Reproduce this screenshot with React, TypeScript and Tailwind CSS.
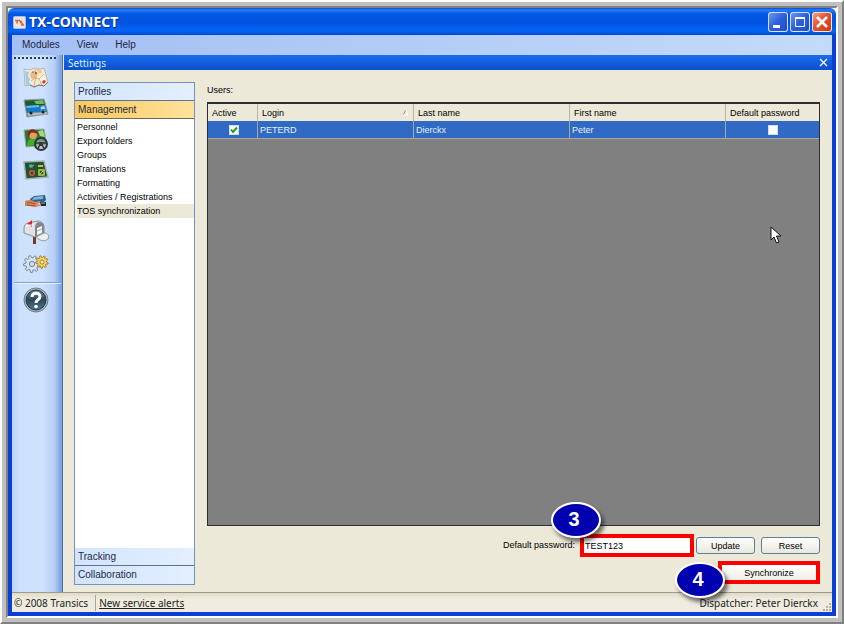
import React, { useState } from "react";

const ui = "font-['Liberation_Sans',Arial,sans-serif]";
const status = "font-['Noto_Sans','Liberation_Sans',sans-serif]";

const settingsLinks = [
  "Personnel",
  "Export folders",
  "Groups",
  "Translations",
  "Formatting",
  "Activities / Registrations",
  "TOS synchronization",
];

// Outline of a cog: each tooth is four points, two inner and two outer
function gearPath(cx: number, cy: number, inner: number, outer: number, teeth: number) {
  const points: string[] = [];
  for (let i = 0; i < teeth; i++) {
    [[0, inner], [0.2, outer], [0.5, outer], [0.7, inner]].forEach(([t, r]) => {
      const a = ((i + t) / teeth) * Math.PI * 2;
      points.push(`${(cx + Math.cos(a) * r).toFixed(2)} ${(cy + Math.sin(a) * r).toFixed(2)}`);
    });
  }
  return `M${points.join(" L")} Z`;
}

function MapIcon() {
  return (
    <svg width="28" height="24" viewBox="0 0 28 24">
      <path d="M2 4 L8 5 L13 3 L18 4 L22 3 L26 17 L22 21 L17 20 L12 22 L8 20 L3 21 Z" fill="#f9ead2" stroke="#a9adb3" strokeWidth="0.800" />
      <path d="M3 6 L7 7 L6 11 L8 14 L7 17 L9 20 L4 20 Z" fill="#9ccdf0" />
      <path d="M9 7 L13 6 L16 9 L14 13 L10 14 L8 11 Z" fill="#e9bb88" />
      <path d="M14 4 L19 4 L20 8 L16 8 Z" fill="#f0c79a" />
      <path d="M16 12 L21 10 L23 15 L18 17 Z" fill="#fff6e8" />
      <path d="M9 16 L13 13 L17 14 L22 9 M13 4 L14 12 L12 21 M17 14 L20 20" stroke="#d9a06a" fill="none" strokeWidth="0.800" />
      <circle cx="14" cy="8" r="0.900" fill="#7b4a2b" />
      <circle cx="11" cy="7" r="0.700" fill="#7b4a2b" />
      <path d="M20 17 L22 15 L24 16 L22 19 Z" fill="#e5281b" />
      <path d="M8 20 L12 22 L17 20 L22 21 L26 17" stroke="#6f747b" fill="none" />
    </svg>
  );
}

function TruckIcon() {
  return (
    <svg width="28" height="24" viewBox="0 0 28 24">
      <path d="M2 4 L22 3 L26 18 L5 21 Z" fill="#57686c" stroke="#8b9ba5" />
      <path d="M3 5 L21 4 L23 9 L4 10 Z" fill="#1f5a2c" />
      <path d="M12 5 L21 4 L22 8 L14 8 Z" fill="#74bb52" />
      <path d="M4 10 L17 9 L18 16 L6 17 Z" fill="#1a76c6" />
      <path d="M4 10 L17 9 L17 11 L5 12 Z" fill="#54c0ee" />
      <path d="M18 10 L23 9 L25 15 L18 16 Z" fill="#2a8edb" />
      <path d="M19 11 L22 10 L23 13 L19 13 Z" fill="#b7e1f6" />
      <path d="M5 17 L25 16 L25 18 L6 20 Z" fill="#b4bcbb" />
      <circle cx="9" cy="17" r="1.500" fill="#16222b" />
      <circle cx="21" cy="16" r="1.500" fill="#16222b" />
    </svg>
  );
}

function DriverIcon() {
  return (
    <svg width="28" height="26" viewBox="0 0 28 26">
      <path d="M2 4 L22 3 L25 19 L4 21 Z" fill="#2d7432" stroke="#a3adb0" />
      <path d="M16 5 L21 4 L23 11 L18 10 Z" fill="#a4d973" />
      <path d="M5 20 C5 14 8 12 12 12 C16 12 17 15 17 19 Z" fill="#3fae2a" />
      <circle cx="11" cy="9" r="4" fill="#e99a5c" />
      <path d="M6 9 C5 2 15 1 16 8 C13 7 10 5 8 8 L7 12 Z" fill="#7c2f14" />
      <circle cx="19" cy="18" r="6" fill="#b8c6c8" fillOpacity="0.500" stroke="#30363a" strokeWidth="2" />
      <path d="M13 17 L25 17 M19 18 L16 22 M19 18 L22 22" stroke="#30363a" strokeWidth="1.500" />
      <circle cx="19" cy="18" r="2" fill="#30363a" />
    </svg>
  );
}

function BoardIcon() {
  return (
    <svg width="28" height="24" viewBox="0 0 28 24">
      <path d="M2 4 L22 3 L26 19 L4 21 Z" fill="#245230" stroke="#a8b2b5" strokeWidth="1.500" />
      <path d="M7 7 L11 9 M7 9 L12 7 M9 6 L9 10" stroke="#63b7d0" />
      <rect x="16" y="7" width="5" height="2" fill="#c9bd48" />
      <circle cx="10" cy="15" r="2.300" fill="none" stroke="#cf5a34" strokeWidth="1.500" />
      <rect x="17" y="12" width="5" height="5" fill="none" stroke="#b9cf4b" strokeWidth="1.500" />
      <path d="M18 16 L21 13" stroke="#b9cf4b" />
    </svg>
  );
}

function HandIcon() {
  return (
    <svg width="26" height="20" viewBox="0 0 26 20">
      <path d="M7 8 L11 5 L22 4 L23 9 L20 12 L8 11 Z" fill="#2c6294" />
      <path d="M11 6 L20 5 L20 8 L9 9 Z" fill="#86b3d4" />
      <path d="M2 10 C6 8 10 9 12 11 L17 10 C18 11 16 13 13 13 L19 14 L13 16 L6 15 L2 15 Z" fill="#d98455" />
      <path d="M4 12 C8 11 9 12 12 13 M4 14 L12 15" stroke="#8e4526" fill="none" strokeWidth="0.800" />
      <path d="M17 11 H23 V15 H18 Z" fill="#1c2b3c" />
      <path d="M18 12 H22" stroke="#8fb0c9" />
    </svg>
  );
}

function MailboxIcon() {
  return (
    <svg width="28" height="26" viewBox="0 0 28 26">
      <path d="M11 15 H14 V25 H11 Z" fill="#6e4023" />
      <path d="M2 14 V9 C2 6 4 4 6 4 L16 2 C20 2 22 5 22 8 V15 L13 18 Z" fill="#dfe1e2" stroke="#8b9094" />
      <path d="M13 18 V9 C13 5 15 3 17 3 C21 3 22 6 22 8 V15 Z" fill="#80868b" />
      <path d="M15 9 L20 7 L20 14 L15 16 Z" fill="#f7f7f5" />
      <path d="M15 12 L20 10" stroke="#a3a7ab" />
      <path d="M14 18 L22 14 C26 14 28 17 26 20 C23 23 18 22 14 18 Z" fill="#eceeef" stroke="#92979a" />
      <path d="M5 5 L10 1 L10 8 L8 6 Z" fill="#e02432" />
      <path d="M4 8 C5 6 7 6 11 6" stroke="#fff" fill="none" />
    </svg>
  );
}

function GearsIcon() {
  return (
    <svg width="28" height="24" viewBox="0 0 28 24">
      <path d={gearPath(10, 13, 6.2, 8.5, 9)} fill="#d5e3f5" stroke="#78879c" />
      <circle cx="10" cy="13" r="2.700" fill="#c9dcf7" stroke="#78879c" />
      <path d={gearPath(20, 11, 4.5, 6.3, 9)} fill="#f7d25a" stroke="#a8842c" />
      <circle cx="20" cy="11" r="2" fill="#eaf2ff" stroke="#a8842c" />
    </svg>
  );
}

function HelpIcon() {
  return (
    <svg width="28" height="28" viewBox="0 0 28 28">
      <defs>
        <linearGradient id="help" x1="0" y1="0" x2="0" y2="1">
          <stop offset="0" stopColor="#6f8898" />
          <stop offset="0.500" stopColor="#2c4656" />
          <stop offset="1" stopColor="#4d7f92" />
        </linearGradient>
      </defs>
      <circle cx="14" cy="14" r="12" fill="#a9b8c4" stroke="#6c7c8b" />
      <circle cx="14" cy="14" r="10" fill="url(#help)" stroke="#223644" />
      <path d="M10 11 C10 6 18 6 18 10.500 C18 14 14 13.500 14 17" fill="none" stroke="#fff" strokeWidth="3" />
      <circle cx="14" cy="20.500" r="1.800" fill="#fff" />
    </svg>
  );
}

const modules = [
  { label: "Map", icon: <MapIcon /> },
  { label: "Vehicles", icon: <TruckIcon /> },
  { label: "Drivers", icon: <DriverIcon /> },
  { label: "Planning", icon: <BoardIcon /> },
  { label: "Trailers", icon: <HandIcon /> },
  { label: "Messages", icon: <MailboxIcon /> },
  { label: "Settings", icon: <GearsIcon /> },
];

function TitleBar() {
  const btn = "w-5 h-5 rounded-[3px] border border-white/80 flex items-center justify-center";
  return (
    <header className="h-[27px] shrink-0 flex items-center pt-px pl-[5px] pr-1 rounded-t-md bg-[linear-gradient(#0a4fd8_0%,#2a7df5_8%,#0358e4_20%,#0254e0_55%,#0365f8_85%,#0347c8_100%)]">
      <svg width="13" height="13" viewBox="0 0 13 13">
        <rect x="0.500" y="0.500" width="12" height="12" rx="1" fill="#e8e6e4" stroke="#a9bede" />
        <path d="M2 4.500 H6 M4 4.500 V7.500 M6 4 L10 8.500 M8 9 H11 M7 7 L9 5" stroke="#e0602c" strokeWidth="1.500" fill="none" />
      </svg>
      <h1 className={`${status} flex-1 ml-[3px] text-[14px] leading-5 font-bold text-white [text-shadow:1px_1px_0_#0b2f8c]`}>TX-CONNECT</h1>
      <div className="flex gap-[2px]">
        <button aria-label="Minimize" className={`${btn} bg-[linear-gradient(135deg,#6c97f2,#2a5fdd_50%,#1c4fd0)]`}>
          <svg width="16" height="16" viewBox="0 0 16 16"><rect x="3" y="11" width="7" height="3" fill="#fff" /></svg>
        </button>
        <button aria-label="Maximize" className={`${btn} bg-[linear-gradient(135deg,#6c97f2,#2a5fdd_50%,#1c4fd0)]`}>
          <svg width="16" height="16" viewBox="0 0 16 16"><path d="M3.500 4 H12.500 V12.500 H3.500 Z" fill="none" stroke="#fff" /><path d="M3 4 H13" stroke="#fff" strokeWidth="2" /></svg>
        </button>
        <button aria-label="Close" className={`${btn} bg-[linear-gradient(135deg,#f0a088,#e2542f_45%,#c63a16)]`}>
          <svg width="16" height="16" viewBox="0 0 16 16"><path d="M3 3 L13 13 M13 3 L3 13" stroke="#fff" strokeWidth="2.500" /></svg>
        </button>
      </div>
    </header>
  );
}

function ModuleBar() {
  return (
    <aside className="w-[51px] shrink-0 pt-[2px] border-r border-[#4d70a8] bg-[linear-gradient(90deg,#b9d2f7_0%,#cfe2fd_15%,#cfe2fd_60%,#b5cff6_85%,#7ea6e2_97%)]">
      <div className="ml-[2px] mr-1 h-[2px] bg-[repeating-linear-gradient(90deg,#273a63_0,#273a63_2px,transparent_2px,transparent_4px)]" />
      <nav className="flex flex-col items-center pt-[2px] pr-[3px]">
        {modules.map((m) => (
          <button key={m.label} aria-label={m.label} className="h-[31px] w-full flex items-center justify-center">
            {m.icon}
          </button>
        ))}
        <div className="w-full ml-[3px] mt-1 border-t border-[#7f9fd3] border-b border-b-white/70" />
        <button aria-label="Help" className="h-8 w-full flex items-center justify-center">
          <HelpIcon />
        </button>
      </nav>
    </aside>
  );
}

function SettingsNav() {
  const head = "h-[18px] shrink-0 w-full pl-[3px] text-left text-[10px] leading-4 text-[#1b2a45]";
  return (
    <nav className="w-[121px] shrink-0 flex flex-col -mb-px bg-white border border-[#6f94c2]">
      <button className={`${head} border-b border-[#56749c] bg-linear-to-r from-[#d2e4fd] to-[#e4effe]`}>Profiles</button>
      <button className={`${head} border-b border-[#6d6a58] bg-linear-to-r from-[#fdc95c] to-[#fee29a]`}>Management</button>
      <ul className="flex-1 pt-px pl-[2px]">
        {settingsLinks.map((l) => (
          <li key={l} className={l === "TOS synchronization" ? "bg-[#ece9d8]" : ""}>
            <a href="#" className="block text-[9px] leading-[14px] text-black">{l}</a>
          </li>
        ))}
      </ul>
      <button className={`${head} border-b border-[#56749c] bg-linear-to-r from-[#d2e4fd] to-[#e4effe]`}>Tracking</button>
      <button className={`${head} bg-linear-to-r from-[#d2e4fd] to-[#e4effe]`}>Collaboration</button>
    </nav>
  );
}

function UsersTable() {
  const [active, setActive] = useState(true);
  const [useDefault, setUseDefault] = useState(false);
  const th = "h-[17px] p-0 pl-1 text-left font-normal border-r border-[#b9b6a4]";
  const td = "h-[18px] p-0 pl-[2px] border-r border-b border-[#a9a797]";
  const box = "appearance-none block mx-auto w-[10px] h-[10px] bg-white border border-[#d5dbe4]";

  return (
    <div className="relative flex-1 bg-[#808080] border border-t-2 border-[#2e2e2e]">
      <table className="w-full table-fixed border-separate border-spacing-0 text-[9px] leading-3">
        <thead className="bg-[#ece9d8] text-black">
          <tr>
            <th className={`${th} w-[50px]`}>Active</th>
            <th className={th}>
              <span className="flex items-center justify-between pr-1">
                Login
                <svg width="7" height="7" viewBox="0 0 7 7"><path d="M1 6 L4 1" stroke="#9a9788" /><path d="M4 1 L6 6 H1" stroke="#fff" fill="none" /></svg>
              </span>
            </th>
            <th className={th}>Last name</th>
            <th className={th}>First name</th>
            <th className="w-[93px] p-0 pl-1 text-left font-normal">Default password</th>
          </tr>
        </thead>
        <tbody className="bg-[#316ac5] text-[#e4f1f4]">
          <tr>
            <td className={td}>
              <span className="relative block">
                <input type="checkbox" aria-label="Active" className={box} checked={active} onChange={(e) => setActive(e.target.checked)} />
                {active && (
                  <svg className="absolute inset-0 m-auto pointer-events-none" width="8" height="8" viewBox="0 0 8 8">
                    <path d="M1 3.500 L3 6 L7 1.500" fill="none" stroke="#1f9a25" strokeWidth="2" />
                  </svg>
                )}
              </span>
            </td>
            <td className={td}>PETERD</td>
            <td className={td}>Dierckx</td>
            <td className={td}>Peter</td>
            <td className="p-0 border-b border-[#a9a797]">
              <input type="checkbox" aria-label="Default password" className={box} checked={useDefault} onChange={(e) => setUseDefault(e.target.checked)} />
            </td>
          </tr>
        </tbody>
      </table>
      <svg className="absolute top-[122px] right-[37px]" width="12" height="18" viewBox="0 0 12 18">
        <path d="M1 1 V14 L4 11 L6.500 17 L9 16 L6.500 10 H11 Z" fill="#fff" stroke="#111" />
      </svg>
    </div>
  );
}

function Step({ n, className }: { n: number; className: string }) {
  return (
    <span className={`absolute z-10 w-[50px] h-9 pr-1 rounded-[50%] border-2 border-white bg-[#0000b0] text-white text-[20px] leading-[30px] font-bold text-center shadow-[3px_4px_4px_rgba(0,0,0,0.55)] ${className}`}>
      {n}
    </span>
  );
}

export default function App() {
  const [password, setPassword] = useState("TEST123");
  const xpButton = "w-[59px] h-[17px] rounded-[3px] border border-[#5d7f9d] bg-linear-to-b from-white to-[#e9e7dc] text-[9px] leading-3 text-black";

  return (
    <div className={`${ui} min-h-screen flex flex-col border-2 border-t-white border-l-white border-r-[#808080] border-b-[#808080] bg-white`}>
      <div className="flex-1 flex flex-col border-4 border-[#c0c0c0]">
        <div className="flex-1 flex flex-col border-2 border-t-[#808080] border-l-[#808080] border-r-white border-b-white">
          <TitleBar />
          <div className="flex-1 flex flex-col border-4 border-t-0 border-[#0a3fd6] bg-[#ece9d8]">
            <nav className="h-5 shrink-0 flex items-center gap-[17px] pl-[10px] bg-linear-to-r from-[#a3bff3] to-[#c4dafa] text-[10px] leading-4 text-[#1c2440]">
              <button>Modules</button>
              <button>View</button>
              <button>Help</button>
            </nav>

            <div className="flex-1 flex">
              <ModuleBar />
              <div className="flex-1 flex flex-col pl-px">
                <div className={`${status} h-[15px] shrink-0 flex items-center justify-between px-1 bg-linear-to-b from-[#1b6cec] to-[#0a50cd] text-[10px] leading-[14px] text-[#d7f0f2]`}>
                  <h2>Settings</h2>
                  <button aria-label="Close settings">
                    <svg width="9" height="9" viewBox="0 0 9 9"><path d="M1 1 L8 8 M8 1 L1 8" stroke="#fff" strokeWidth="1.300" /></svg>
                  </button>
                </div>

                <main className="flex-1 flex gap-3 pt-3 pr-3 pb-2 pl-[10px]">
                  <SettingsNav />
                  <section className="flex-1 flex flex-col">
                    <h3 className="h-5 text-[9px] leading-4">Users:</h3>
                    <UsersTable />

                    <div className="mt-2 flex items-center justify-end text-[9px]">
                      <label htmlFor="password" className="mr-[5px]">Default password:</label>
                      <div className="relative mr-[2px]">
                        <Step n={3} className="-left-[29px] -top-8" />
                        <input
                          id="password"
                          type="text"
                          value={password}
                          onChange={(e) => setPassword(e.target.value)}
                          className="block w-[114px] h-[23px] border-4 border-[#fe0000] bg-white pl-px text-[9px] leading-3 text-black outline-none"
                        />
                      </div>
                      <button className={`${xpButton} mr-[6px]`}>Update</button>
                      <button className={xpButton}>Reset</button>
                    </div>

                    <div className="mt-1 flex justify-end">
                      <div className="relative">
                        <Step n={4} className="-left-[43px] top-px" />
                        <button className="block w-[102px] h-[23px] border-4 border-[#fe0000] bg-linear-to-b from-white to-[#efede6] text-[9px] leading-3 text-black">
                          Synchronize
                        </button>
                      </div>
                    </div>
                  </section>
                </main>
              </div>
            </div>

            <footer className={`${status} h-5 shrink-0 flex items-center pl-[2px] border-t border-[#9d9b8b] bg-linear-to-b from-[#dedbc9] to-[#efecdf] to-30% text-[10px] leading-4 text-[#222]`}>
              <span className="pr-[7px]">© 2008 Transics</span>
              <a href="#" className="pl-[3px] border-l border-[#aaa795] underline">New service alerts</a>
              <span className="ml-auto mr-1">Dispatcher: Peter Dierckx</span>
              <svg width="10" height="10" viewBox="0 0 10 10" className="self-end">
                <path d="M7 1h2v2h-2z M4 4h2v2h-2z M7 4h2v2h-2z M1 7h2v2h-2z M4 7h2v2h-2z M7 7h2v2h-2z" fill="#b5b29f" />
              </svg>
            </footer>
          </div>
        </div>
      </div>
    </div>
  );
}
